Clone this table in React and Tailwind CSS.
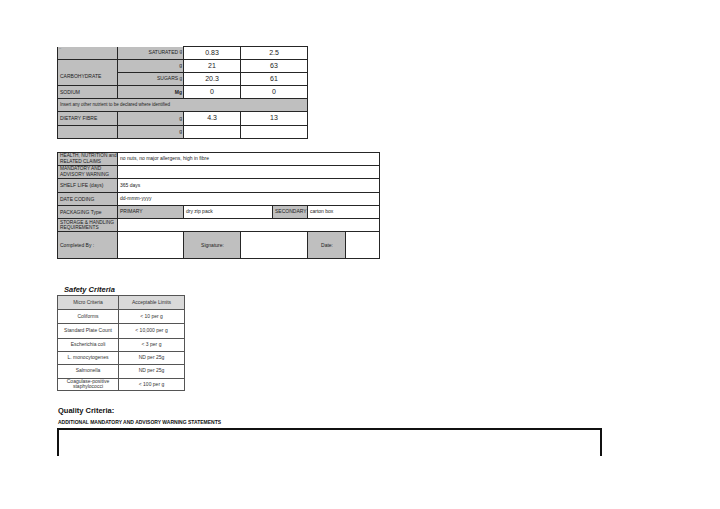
import React from 'react';

const F = { fontFamily: '"Liberation Sans", Arial, sans-serif' };

const B = 'border-[1.5px] border-[#262626]';
const GRAY = 'bg-[#bfbfbf]';

function Cell({ children, className = '', h = 13, align = 'left', ...rest }) {
  const justify = align === 'right' ? 'justify-end' : align === 'center' ? 'justify-center' : 'justify-start';
  return (
    <td className={`${B} p-0 align-middle ${className}`} {...rest}>
      <div className={`flex items-center overflow-hidden px-[1px] ${justify}`} style={{ height: h - 0.9 }}>
        {children}
      </div>
    </td>
  );
}

const micro = [
  ['Coliforms', '< 10 per g', 14],
  ['Standard Plate Count', '< 10,000 per g', 14],
  ['Escherichia coli', '< 3 per g', 13],
  ['L. monocytogenes', 'ND per 25g', 13],
  ['Salmonella', 'ND per 25g', 14],
  ['Coagulase-positive staphylococci', '< 100 per g', 12],
];

function NutritionTable() {
  return (
    <table className="border-collapse table-fixed text-[#222]" style={{ ...F, width: 250 }}>
      <colgroup>
        <col style={{ width: 60 }} />
        <col style={{ width: 66 }} />
        <col style={{ width: 57 }} />
        <col style={{ width: 67 }} />
      </colgroup>
      <tbody>
        <tr>
          <Cell className={`${GRAY} border-t-0`}>
            <span className="text-[4px] leading-none self-start text-[#666]">~</span>
          </Cell>
          <Cell className={`${GRAY} border-t-0`} align="right">
            <span className="text-[5px]">SATURATED&nbsp;</span>
            <span className="text-[4.5px]">g</span>
          </Cell>
          <Cell align="center"><span className="text-[7px]">0.83</span></Cell>
          <Cell align="center"><span className="text-[7px]">2.5</span></Cell>
        </tr>
        <tr>
          <td rowSpan={2} className={`${B} ${GRAY} p-0 align-middle`}>
            <span className="text-[5px] pl-[2px]">CARBOHYDRATE</span>
          </td>
          <Cell className={GRAY} align="right"><span className="text-[5px]">g</span></Cell>
          <Cell align="center"><span className="text-[7px]">21</span></Cell>
          <Cell align="center"><span className="text-[7px]">63</span></Cell>
        </tr>
        <tr>
          <Cell className={GRAY} align="right">
            <span className="text-[5px]">SUGARS&nbsp;</span>
            <span className="text-[4.5px]">g</span>
          </Cell>
          <Cell align="center"><span className="text-[7px]">20.3</span></Cell>
          <Cell align="center"><span className="text-[7px]">61</span></Cell>
        </tr>
        <tr>
          <Cell className={GRAY}><span className="text-[5px] pl-[1px]">SODIUM</span></Cell>
          <Cell className={GRAY} align="right"><span className="text-[5px] font-bold">Mg</span></Cell>
          <Cell align="center"><span className="text-[7px]">0</span></Cell>
          <Cell align="center"><span className="text-[7px]">0</span></Cell>
        </tr>
        <tr>
          <Cell className={GRAY} colSpan={4}>
            <span className="text-[4.5px] pl-[1px]">Insert any other nutrient to be declared where identified</span>
          </Cell>
        </tr>
        <tr>
          <Cell className={GRAY}><span className="text-[5px] pl-[1px]">DIETARY FIBRE</span></Cell>
          <Cell className={GRAY} align="right"><span className="text-[5px]">g</span></Cell>
          <Cell align="center"><span className="text-[7px]">4.3</span></Cell>
          <Cell align="center"><span className="text-[7px]">13</span></Cell>
        </tr>
        <tr>
          <Cell className={GRAY}></Cell>
          <Cell className={GRAY} align="right"><span className="text-[5px]">g</span></Cell>
          <Cell></Cell>
          <Cell></Cell>
        </tr>
      </tbody>
    </table>
  );
}

function Label({ children }) {
  return <span className="text-[5px] leading-[6px] pl-[1px] whitespace-nowrap">{children}</span>;
}

function TwoLine({ a, b }) {
  return (
    <div className="flex flex-col pl-[1px] text-[4.8px] leading-[5.6px] whitespace-nowrap">
      <span>{a}</span>
      <span>{b}</span>
    </div>
  );
}

function Value({ children }) {
  return <span className="text-[5px] pl-[1px] whitespace-nowrap">{children}</span>;
}

function ProductTable() {
  return (
    <table className="border-collapse table-fixed text-[#222]" style={{ ...F, width: 322 }}>
      <colgroup>
        {[60, 66, 57, 32, 35, 38, 34].map((w, i) => (
          <col key={i} style={{ width: w }} />
        ))}
      </colgroup>
      <tbody>
        <tr>
          <Cell className={GRAY}><TwoLine a="HEALTH, NUTRITION and" b="RELATED CLAIMS" /></Cell>
          <Cell colSpan={6}><Value>no nuts, no major allergens, high in fibre</Value></Cell>
        </tr>
        <tr>
          <Cell className={GRAY}><TwoLine a="MANDATORY AND" b="ADVISORY WARNING" /></Cell>
          <Cell colSpan={6}></Cell>
        </tr>
        <tr>
          <Cell className={GRAY} h={14}><Label>SHELF LIFE (days)</Label></Cell>
          <Cell colSpan={6} h={14}><Value>365 days</Value></Cell>
        </tr>
        <tr>
          <Cell className={GRAY}><Label>DATE CODING</Label></Cell>
          <Cell colSpan={6}><Value>dd-mmm-yyyy</Value></Cell>
        </tr>
        <tr>
          <Cell className={GRAY}><Label>PACKAGING Type</Label></Cell>
          <Cell className={GRAY}><Value>PRIMARY</Value></Cell>
          <Cell colSpan={2}><Value>dry zip pack</Value></Cell>
          <Cell className={GRAY}><Value>SECONDARY</Value></Cell>
          <Cell colSpan={2}><Value>carton box</Value></Cell>
        </tr>
        <tr>
          <Cell className={GRAY}><TwoLine a="STORAGE & HANDLING" b="REQUIREMENTS" /></Cell>
          <Cell colSpan={6}></Cell>
        </tr>
        <tr>
          <Cell className={GRAY} h={27}><Label>Completed By :</Label></Cell>
          <Cell h={27}></Cell>
          <Cell className={GRAY} h={27} align="center"><Value>Signature:</Value></Cell>
          <Cell colSpan={2} h={27}></Cell>
          <Cell className={GRAY} h={27} align="center"><Value>Date:</Value></Cell>
          <Cell h={27}></Cell>
        </tr>
      </tbody>
    </table>
  );
}

function MicroTable() {
  const c = 'border border-[#555] p-0 align-middle';
  return (
    <table className="border-collapse table-fixed text-[#333] border-[1.5px] border-[#222]" style={{ ...F, width: 127 }}>
      <colgroup>
        <col style={{ width: 61 }} />
        <col style={{ width: 66 }} />
      </colgroup>
      <tbody>
        <tr className="bg-[#d9d9d9]">
          <td className={c}>
            <div className="h-[13px] flex items-center justify-center text-[5px]">Micro Criteria</div>
          </td>
          <td className={c}>
            <div className="h-[13px] flex items-center justify-center text-[5px]">Acceptable Limits</div>
          </td>
        </tr>
        {micro.map(([name, limit, h], i) => (
          <tr key={i}>
            <td className={c}>
              <div className="flex items-center justify-center overflow-hidden text-center text-[5px] leading-[5.6px]" style={{ height: h - 0.9 }}>
                {name}
              </div>
            </td>
            <td className={c}>
              <div className="flex items-center justify-center text-[5px]" style={{ height: h - 0.9 }}>
                {limit}
              </div>
            </td>
          </tr>
        ))}
      </tbody>
    </table>
  );
}

export default function App() {
  return (
    <div className="w-[720px] h-[509px] bg-white overflow-hidden pl-[57px] pt-[46px]" style={F}>
      <NutritionTable />

      <div className="mt-[13px]">
        <ProductTable />
      </div>

      <p className="mt-[26px] ml-[7px] text-[7.5px] font-bold italic leading-[9px] text-[#111]">Safety Criteria</p>
      <div className="mt-[1px]">
        <MicroTable />
      </div>

      <p className="mt-[15px] ml-[1px] text-[7.5px] font-bold leading-[9px] text-[#111]">Quality Criteria:</p>
      <p className="mt-[4px] ml-[1px] text-[5px] font-bold leading-[6px] text-[#111]">
        ADDITIONAL MANDATORY AND ADVISORY WARNING STATEMENTS
      </p>
      <div className="mt-[3px] w-[545px] h-[28px] border-t-2 border-x-2 border-[#111]"></div>
    </div>
  );
}
